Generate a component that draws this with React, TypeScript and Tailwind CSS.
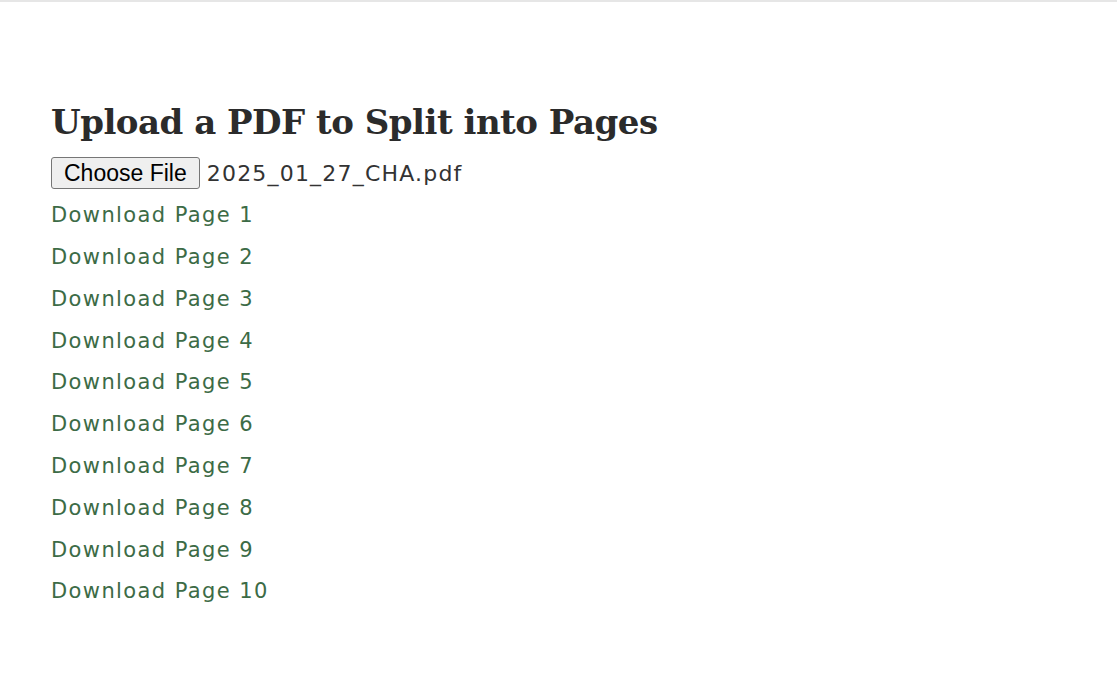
const pages = Array.from({ length: 10 }, (_, i) => i + 1)

const App = () => {
    return (
        <div className="min-h-screen bg-white border-t-2 border-[#e6e6e6]">
            <div className="px-[51px] pt-[100px]">
                <h1 className="text-[34px] leading-[40px] font-bold text-[#2b2b2b] font-['DejaVu_Serif',serif] tracking-[-0.5px]">
                    Upload a PDF to Split into Pages
                </h1>
                <div className="mt-[15px] flex items-center gap-[7px] h-[32px]">
                    <button className="h-[32px] px-[12px] border border-[#767676] rounded-[3px] bg-[#efefef] text-[23px] leading-none text-black font-['Liberation_Sans',sans-serif]">
                        Choose File
                    </button>
                    <span className="text-[22px] text-[#333] font-['DejaVu_Sans',sans-serif] tracking-[1.2px]">
                        2025_01_27_CHA.pdf
                    </span>
                </div>
                <ul className="mt-[6px] font-['DejaVu_Sans',sans-serif]">
                    {pages.map((n) => (
                        <li key={n} className="h-[41.8px] flex items-center">
                            <a href="#" className="text-[21px] text-[#3c6b46] tracking-[1.4px]">
                                Download Page {n}
                            </a>
                        </li>
                    ))}
                </ul>
            </div>
        </div>
    )
}

export default App
